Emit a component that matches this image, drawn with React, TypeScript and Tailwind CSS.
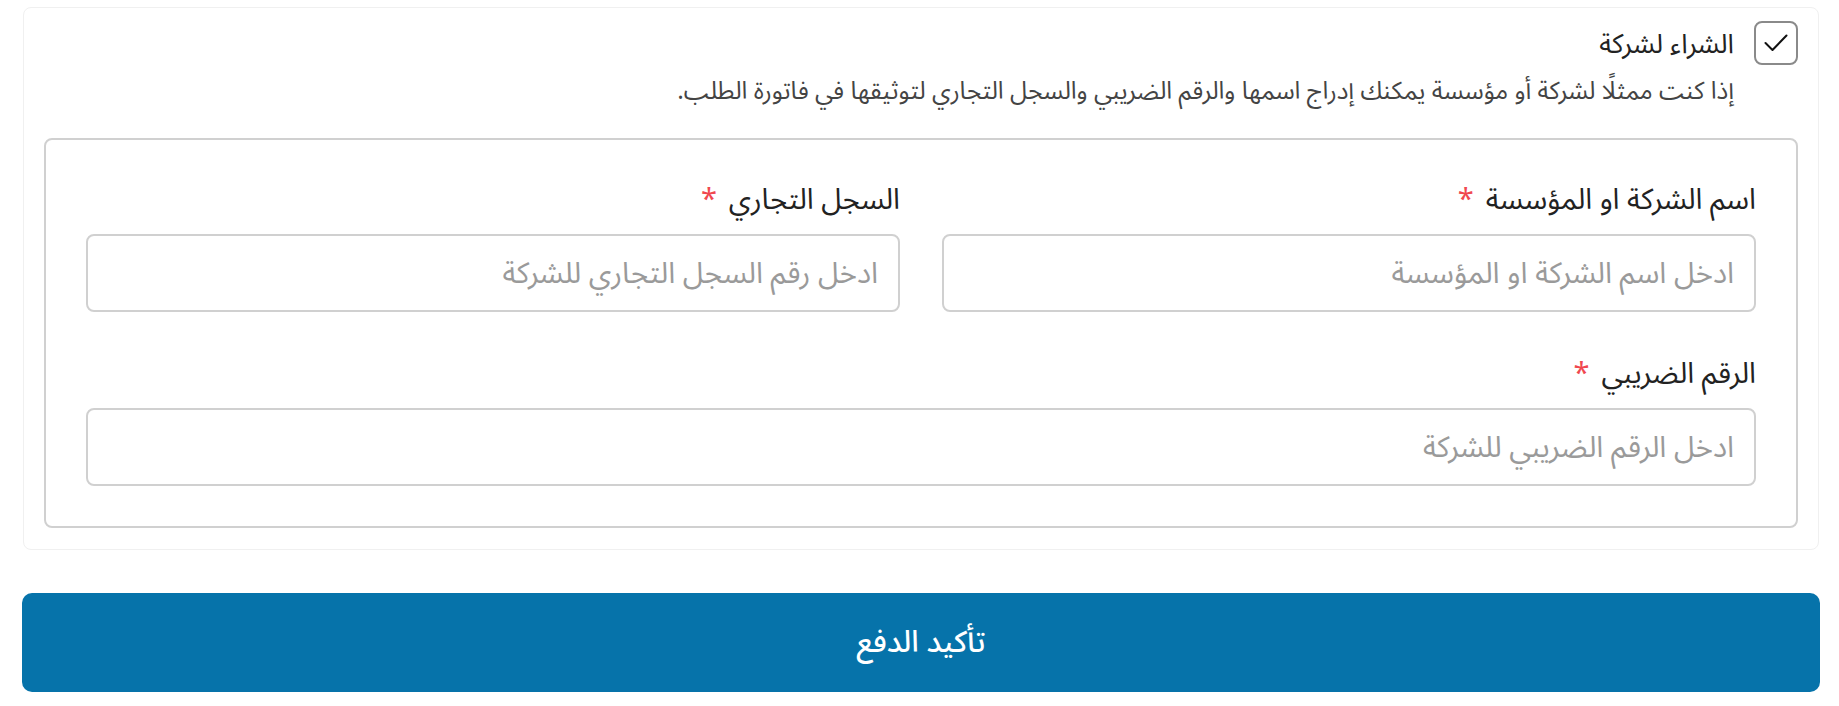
import React from "react";

const font = { fontFamily: '"Noto Sans Arabic", "Noto Sans", "DejaVu Sans", sans-serif' };

function Field({ label, placeholder, wide }: { label: string; placeholder: string; wide?: boolean }) {
  return (
    <div className={wide ? "col-span-2 flex flex-col" : "flex flex-col"}>
      <label className="text-[29px] leading-[40px] text-[#222222] mb-[14px]">
        {label}
        <span className="text-[#f0484f] ms-3">*</span>
      </label>
      <input
        placeholder={placeholder}
        className="h-[78px] w-full rounded-[8px] border-2 border-[#d0d0d0] bg-white px-5 text-[29.5px] text-[#222] placeholder:text-[#9a9a9a] outline-none"
        style={font}
      />
    </div>
  );
}

export default function App() {
  return (
    <div dir="rtl" className="min-h-screen bg-white pl-[22px] pr-[19px] pt-[7px]" style={font}>
      <div className="mx-px rounded-[8px] border border-[#f0f0f0] px-[20px] pt-[13px] pb-[21px]">
        <div className="flex items-start gap-5">
          <div className="flex h-[44px] w-[44px] shrink-0 items-center justify-center rounded-[8px] border-2 border-[#8a8a8a] bg-white">
            <svg width="24" height="18" viewBox="0 0 24 18" fill="none">
              <polyline points="1.5,9 8.5,16 22.5,1.5" stroke="#111" strokeWidth="2" strokeLinecap="round" strokeLinejoin="round" />
            </svg>
          </div>
          <div className="flex flex-col">
            <div className="pt-[2px] text-[27px] leading-[44px] text-[#222222]">الشراء لشركة</div>
            <p className="mt-[8px] text-[24.5px] leading-[32px] text-[#444444]">
              إذا كنت ممثلًا لشركة أو مؤسسة يمكنك إدراج اسمها والرقم الضريبي والسجل التجاري لتوثيقها في فاتورة الطلب.
            </p>
          </div>
        </div>
        <div className="mt-[31px] rounded-[8px] border-2 border-[#d0d0d0] p-10">
          <div className="grid grid-cols-2 gap-x-[42px] gap-y-[42px]">
            <Field label="اسم الشركة او المؤسسة" placeholder="ادخل اسم الشركة او المؤسسة" />
            <Field label="السجل التجاري" placeholder="ادخل رقم السجل التجاري للشركة" />
            <Field label="الرقم الضريبي" placeholder="ادخل الرقم الضريبي للشركة" wide />
          </div>
        </div>
      </div>
      <button
        className="mt-[43px] flex h-[99px] w-full items-center justify-center rounded-[10px] bg-[#0673aa] text-[30px] font-medium text-white"
        style={font}
      >
        تأكيد الدفع
      </button>
    </div>
  );
}
